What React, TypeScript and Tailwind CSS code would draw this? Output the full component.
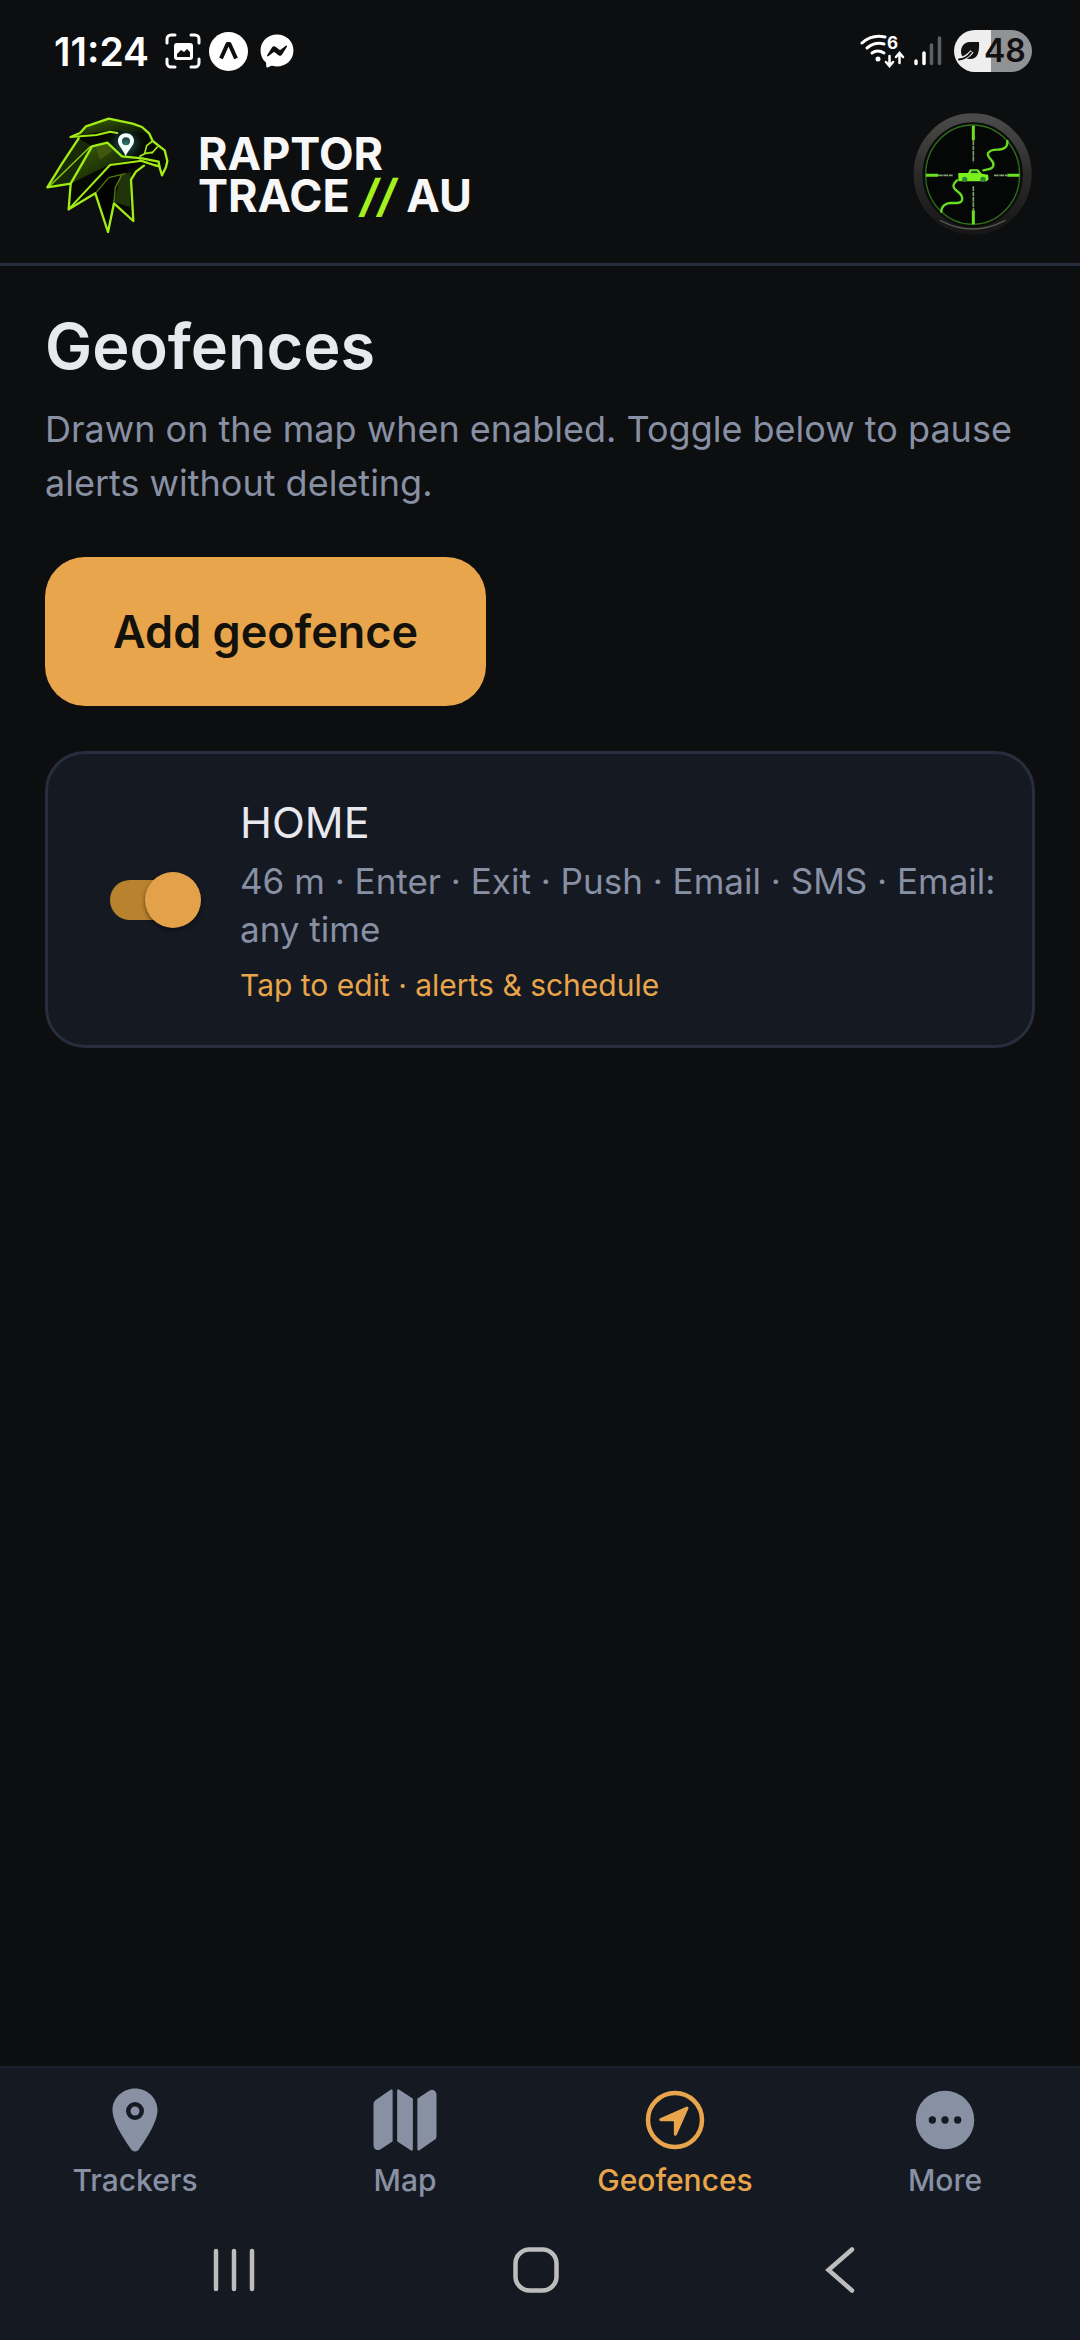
import {useState} from 'react'
import {FaFacebookMessenger} from 'react-icons/fa'
import {IoLocation, IoMap, IoNavigateCircleOutline} from 'react-icons/io5'

const MoreIcon = ({className}: {className?: string}) => (
  <svg viewBox="0 0 512 512" fill="currentColor" className={className} aria-hidden="true">
    <path
      fillRule="evenodd"
      d="M256 48a208 208 0 1 0 0 416 208 208 0 0 0 0-416zM166 230a26 26 0 1 1 0 52 26 26 0 0 1 0-52zm90 0a26 26 0 1 1 0 52 26 26 0 0 1 0-52zm90 0a26 26 0 1 1 0 52 26 26 0 0 1 0-52z"
    />
  </svg>
)

const tabs = [
  {label: 'Trackers', Icon: IoLocation},
  {label: 'Map', Icon: IoMap},
  {label: 'Geofences', Icon: IoNavigateCircleOutline},
  {label: 'More', Icon: MoreIcon},
]

const CaptureIcon = () => (
  <svg width="36" height="36" viewBox="0 0 36 36" fill="none" aria-hidden="true">
    <path
      d="M2 10V6a4 4 0 0 1 4-4h4M26 2h4a4 4 0 0 1 4 4v4M34 26v4a4 4 0 0 1-4 4h-4M10 34H6a4 4 0 0 1-4-4v-4"
      stroke="#fff"
      strokeWidth="3"
      strokeLinecap="round"
    />
    <rect x="9" y="10" width="19" height="17" rx="3" fill="#fff" />
    <path d="M12 24v-3l4-4 3 2 3-3 3 3v5z" fill="#0d0e10" />
  </svg>
)

const ExpoIcon = () => (
  <svg width="39" height="39" viewBox="0 0 39 39" aria-hidden="true">
    <circle cx="19.5" cy="19.5" r="19.5" fill="#fff" />
    <path
      d="M12 26.5 18.5 12h2L27 26.5"
      fill="none"
      stroke="#0d0e10"
      strokeWidth="4"
      strokeLinejoin="round"
    />
  </svg>
)

const WifiIcon = () => (
  <svg width="46" height="36" viewBox="0 0 46 36" fill="none" aria-hidden="true">
    <g stroke="#fff" strokeWidth="3" strokeLinecap="round">
      <path d="M2 10Q12 1 25 4" />
      <path d="M7 15q8-6.500 17-4" />
      <path d="M12 20q5.500-4 12 0" />
      <path d="M29.500 23v9M26 29l3.500 4 3.500-4" strokeWidth="2.500" />
      <path d="M39.500 30v-9M36 24l3.500-4 3.500 4" strokeWidth="2.500" />
    </g>
    <circle cx="18" cy="26" r="2.500" fill="#fff" />
    <text x="27" y="16" fill="#fff" fontSize="17" fontWeight="700" fontFamily="Inter, sans-serif">
      6
    </text>
  </svg>
)

const SignalIcon = () => (
  <svg width="28" height="32" viewBox="0 0 28 32" strokeWidth="3.500" strokeLinecap="round" aria-hidden="true">
    <path d="M2 26v2.500M10 18v10.500" stroke="#fff" />
    <path d="M17.500 10v18.500M25.500 3v25.500" stroke="#5f6062" />
  </svg>
)

const LeafIcon = () => (
  <svg width="22" height="22" viewBox="0 0 22 22" aria-hidden="true">
    <path d="M21 2c.5 10-1 17-9 17-4 0-7-1-8-3C1 9 5 2 12 2z" fill="#111" />
    <path d="M0 19.500c6-.5 10-3 14-8" stroke="#eee" strokeWidth="4" fill="none" />
    <path d="M1 19.500c6-.5 9-3 12-7" stroke="#111" strokeWidth="2" fill="none" strokeLinecap="round" />
  </svg>
)

const EagleLogo = () => (
  <svg width="125" height="117" viewBox="45 50 375 351" fill="none" aria-hidden="true">
    <defs>
      <linearGradient id="feather" x1="0" y1="0" x2="1" y2="1">
        <stop offset="0" stopColor="#3d6409" />
        <stop offset="1" stopColor="#050801" />
      </linearGradient>
      <radialGradient id="glow">
        <stop offset="0" stopColor="#2f7d78" />
        <stop offset="1" stopColor="#0a2524" stopOpacity="0" />
      </radialGradient>
    </defs>
    <path
      d="M122 110 168 78 236 55 330 74 358 100 368 122 404 150 412 182 396 225 386 198 345 194 305 237 310 362 252 309 234 395 196 279 116 327 122 250 52 261 146 114z"
      fill="#060902"
    />
    <path d="M168 78 236 55 330 74 358 100 250 90 150 104z" fill="url(#feather)" />
    <path d="M182 138 232 127 270 165 330 174 240 192 125 248z" fill="url(#feather)" />
    <path d="M196 138 232 127 250 150 210 178z" fill="#3e590c" />
    <path d="M52 261 146 114 186 138 125 248z" fill="#182906" />
    <path d="M272 225 302 215 300 320 252 305z" fill="#20330a" />
    <path d="M240 192 196 279 234 390 250 300 270 225 330 190z" fill="#020300" />
    <circle cx="288" cy="130" r="56" fill="url(#glow)" />
    <g stroke="#4f7c0d" strokeWidth="4" strokeLinejoin="round">
      <path d="M196 279 236 232 286 220M252 305 256 262 276 222" />
      <path d="M60 256 182 138" stroke="#8ed114" />
    </g>
    <g stroke="#a0ec14" strokeWidth="7" strokeLinejoin="round" strokeLinecap="round">
      <path d="M122 110 150 98 168 78 236 55 308 70 336 80 358 100 368 122 404 150 412 182 408 200 396 225 388 198 372 194 330 180" />
      <path d="M122 110 200 104 240 94 262 98" strokeWidth="6" />
      <path d="M146 114 96 190 52 261 122 250 186 138 232 127 276 168 336 174 386 184 388 198" />
      <path d="M122 250 116 327 196 279 234 395 252 309 310 362 303 238 318 214 342 196" />
      <path d="M116 327 240 194 330 182" strokeWidth="6" />
      <path d="M368 122 350 136 344 160 330 168M366 158 382 140M344 160 366 156" strokeWidth="5" />
    </g>
    <path
      d="M288 99c-14 0-24 10-24 23 0 14 17 27 23 46 7-19 25-32 25-46 0-13-10-23-24-23zm0 12a12 12 0 1 1 0 24 12 12 0 0 1 0-24z"
      fill="#f2fffd"
      fillRule="evenodd"
    />
  </svg>
)

const ScopeLogo = () => (
  <svg width="122" height="124" viewBox="39 38 366 372" fill="none" aria-hidden="true">
    <defs>
      <linearGradient id="rim" x1="0" y1="0" x2="0" y2="1">
        <stop offset="0" stopColor="#4a4a48" />
        <stop offset=".5" stopColor="#2a2b29" />
        <stop offset="1" stopColor="#161716" />
      </linearGradient>
    </defs>
    <ellipse cx="218" cy="221" rx="163" ry="168" stroke="url(#rim)" strokeWidth="28" fill="#050706" />
    <ellipse cx="218" cy="223" rx="147" ry="154" stroke="#0b0c0b" strokeWidth="7" />
    <path d="M120 360q98 52 196 0" stroke="#55564f" strokeWidth="4" />
    <ellipse cx="218" cy="223" rx="141" ry="149" stroke="#2f6f1c" strokeWidth="4" />
    <g stroke="#6be021">
      <path d="M220 76v44M220 330v42M78 225h36M322 225h36" strokeWidth="9" />
    </g>
    <g stroke="#7c9c6c" strokeWidth="5" strokeDasharray="14 2">
      <path d="M220 120v66M220 258v72M114 225h44M282 225h40" />
    </g>
    <g stroke="#66dd22" strokeWidth="7" strokeLinecap="round" strokeLinejoin="round">
      <path d="M322 122c2 18-10 26-30 26-26 0-34 12-24 24s14 14 12 24-14 10-30 14" />
      <path d="M171 240c-14 12-14 22 0 32s18 18 15 28c-4 10-18 8-34 8s-28 10-28 26" />
    </g>
    <path d="M175 218h29l6-11h24l12 13 18 3 2 14-6 6h-85z" fill="#7cf01c" />
    <path d="M211 218l4-7h15l6 8z" fill="#1c5b30" />
    <circle cx="194" cy="237" r="8" fill="#2a8a3a" />
    <circle cx="249" cy="237" r="8" fill="#2a8a3a" />
  </svg>
)

const StatusBar = () => (
  <div className="flex h-[102px] items-center justify-between pr-12 pl-[54px] text-white">
    <div className="flex items-center gap-2">
      <span className="mr-2 text-[39px] leading-none font-semibold">11:24</span>
      <CaptureIcon />
      <ExpoIcon />
      <FaFacebookMessenger className="ml-1 size-[34px]" />
    </div>
    <div className="flex items-center gap-2">
      <WifiIcon />
      <SignalIcon />
      <div className="ml-1 flex h-[42px] w-[78px] items-center gap-1 rounded-full bg-linear-to-r from-[#eeeeee] from-48% to-[#919294] to-48% pl-1 text-[#111]">
        <LeafIcon />
        <span className="text-[32px] leading-none font-semibold">48</span>
      </div>
    </div>
  </div>
)

const Header = () => (
  <header className="flex items-center justify-between border-b-3 border-[#262d3b] px-[45px] pt-[11px] pb-[26px]">
    <div className="flex items-center gap-7">
      <EagleLogo />
      <p className="text-[45px] leading-[42px] font-bold text-[#f7f7f7]">
        RAPTOR
        <br />
        TRACE <span className="text-[#a4f01c] italic">//</span> AU
      </p>
    </div>
    <ScopeLogo />
  </header>
)

const GeofenceCard = () => {
  const [enabled, setEnabled] = useState(true)
  return (
    <div className="mt-[45px] flex items-center gap-[39px] rounded-[40px] border-3 border-[#282e3e] bg-[#151921] py-10 pr-7 pl-[62px]">
      <label className="relative flex h-14 w-[91px] shrink-0 cursor-pointer items-center">
        <input
          type="checkbox"
          role="switch"
          aria-label="HOME"
          className="peer sr-only"
          checked={enabled}
          onChange={() => setEnabled(!enabled)}
        />
        <span className="h-10 w-20 rounded-full bg-[#5b6070] peer-checked:bg-[#b9822e]" />
        <span className="absolute left-0 size-14 rounded-full bg-[#e3a14a] shadow-[0_2px_4px_rgba(0,0,0,0.5)] peer-checked:right-0 peer-checked:left-auto" />
      </label>
      <a href="#edit" className="block min-w-0 flex-1">
        <div className="text-[43px] leading-14 text-[#e8e8ef]">HOME</div>
        <div className="mt-[7px] text-[35px] leading-12 text-[#8890a4]">
          46 m · Enter · Exit · Push · Email · SMS · Email: any time
        </div>
        <div className="mt-3 text-[30px] leading-10 text-[#e8a54b]">Tap to edit · alerts &amp; schedule</div>
      </a>
    </div>
  )
}

const TabBar = () => (
  <nav className="flex pt-4">
    {tabs.map(({label, Icon}) => (
      <a
        key={label}
        href={`#${label.toLowerCase()}`}
        className={`flex flex-1 flex-col items-center gap-1 text-[30px] leading-10 font-medium ${
          label === 'Geofences' ? 'text-[#e8a54b]' : 'text-[#8890a4]'
        }`}
      >
        <Icon className="size-18" />
        {label}
      </a>
    ))}
  </nav>
)

const SystemNav = () => (
  <div className="flex h-[140px] items-center justify-center gap-[200px] pr-2">
    <button type="button" aria-label="Recents" className="flex w-[102px] justify-center">
      <svg width="48" height="48" viewBox="0 0 48 48" stroke="#bdbdbd" strokeWidth="4.500" strokeLinecap="round">
        <path d="M6 5v38M24 5v38M42 5v38" />
      </svg>
    </button>
    <button type="button" aria-label="Home" className="flex w-[102px] justify-center">
      <svg width="48" height="48" viewBox="0 0 48 48" fill="none" stroke="#bdbdbd" strokeWidth="4.500">
        <rect x="3.500" y="3.500" width="41" height="41" rx="14" />
      </svg>
    </button>
    <button type="button" aria-label="Back" className="flex w-[102px] justify-center">
      <svg width="48" height="48" viewBox="0 0 48 48" fill="none" stroke="#bdbdbd" strokeWidth="4.500" strokeLinecap="round">
        <path d="M38 3.500 14.500 24 38 44.500" />
      </svg>
    </button>
  </div>
)

const App = () => (
  <div className="flex min-h-screen flex-col bg-[#0d0e10] font-[Inter,sans-serif]">
    <StatusBar />
    <Header />
    <main className="flex-1 px-[45px] pt-10">
      <h1 className="text-[63px] leading-20 font-semibold text-[#e8e8ef]">Geofences</h1>
      <p className="mt-4 text-[36px] leading-[54px] text-[#8890a4]">
        Drawn on the map when enabled. Toggle below to pause alerts without deleting.
      </p>
      <button
        type="button"
        className="mt-[47px] block rounded-[40px] bg-[#e8a54b] px-[68px] py-[47px] text-[45px] leading-[55px] font-semibold text-[#12110c]"
      >
        Add geofence
      </button>
      <GeofenceCard />
    </main>
    <footer className="border-t-2 border-[#1c222d] bg-[#151921]">
      <TabBar />
      <SystemNav />
    </footer>
  </div>
)

export default App
